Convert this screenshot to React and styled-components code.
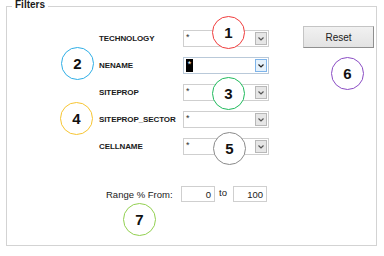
import React from 'react';
import styled, { createGlobalStyle } from 'styled-components';

const GlobalStyle = createGlobalStyle`
  html, body {
    margin: 0;
    padding: 0;
    background: #ffffff;
  }
  body {
    font-family: "Liberation Sans", Arial, sans-serif;
    color: #1a1a1a;
  }
`;

const Page = styled.div`
  width: 384px;
  height: 256px;
  overflow: hidden;
  background: #ffffff;
`;

const Group = styled.div`
  position: relative;
  box-sizing: border-box;
  margin: 6px 0 0 6px;
  width: 371px;
  height: 240px;
  border: 1px solid #d3d3d3;
  box-shadow: inset 1px 1px 0 #ffffff;
`;

const Legend = styled.span`
  position: absolute;
  left: 5px;
  top: -8px;
  padding: 0 3px;
  background: #ffffff;
  font-size: 10px;
  line-height: 12px;
  font-weight: bold;
  color: #1a1a1a;
`;

const Content = styled.div`
  display: flex;
  align-items: flex-start;
`;

const Fields = styled.div`
  display: flex;
  flex-direction: column;
  margin: 23px 0 0 92px;
`;

const Grid = styled.div`
  display: grid;
  grid-template-columns: 84px 86px;
  grid-auto-rows: 17px;
  row-gap: 10px;
  align-items: center;
`;

const Label = styled.span`
  font-size: 8px;
  font-weight: bold;
  color: #1a1a1a;
  letter-spacing: -0.1px;
`;

const Combo = styled.div`
  box-sizing: border-box;
  display: flex;
  align-items: stretch;
  height: 17px;
  border: 1px solid ${p => (p.$focused ? '#b9c9d9' : '#cfcfcf')};
  background: #ffffff;
`;

const ComboText = styled.div`
  flex: 1;
  padding: 1px 0 0 2px;
  font-size: 9px;
  line-height: 10px;
  color: #333;
`;

const Selected = styled.span`
  display: inline-block;
  width: 7px;
  height: 13px;
  background: #000000;
  color: #ffffff;
  font-size: 9px;
  line-height: 10px;
  text-align: center;
`;

const DropButton = styled.div`
  box-sizing: border-box;
  width: 12px;
  margin: 1px;
  display: flex;
  align-items: center;
  justify-content: center;
  border: 1px solid ${p => (p.$focused ? '#7eb4ea' : '#b8b8b8')};
  background: ${p => (p.$focused ? '#e5f1fb' : '#e6e6e6')};
`;

const RangeRow = styled.div`
  display: flex;
  align-items: center;
  margin: 31px 0 0 7px;
  font-size: 9.5px;
  color: #1a1a1a;
`;

const RangeLabel = styled.span`
  width: 75px;
`;

const NumBox = styled.div`
  box-sizing: border-box;
  width: 34px;
  height: 16px;
  border: 1px solid #cfcfcf;
  padding: 2px 3px 0 0;
  text-align: right;
  font-size: 9.5px;
  line-height: 11px;
`;

const To = styled.span`
  width: 18px;
  padding-left: 4px;
  box-sizing: border-box;
  margin-top: -4px;
`;

const ResetButton = styled.button`
  box-sizing: border-box;
  margin: 19px 0 0 34px;
  width: 71px;
  height: 22px;
  border: 1px solid #c4c4c4;
  border-right-color: #8f8f8f;
  border-bottom-color: #8f8f8f;
  background: linear-gradient(#f1f1f1, #e3e3e3);
  font-family: "Liberation Sans", Arial, sans-serif;
  font-size: 10px;
  color: #222;
  padding: 0;
`;

const Marker = styled.div`
  position: absolute;
  left: ${p => p.$x - 7 - 16}px;
  top: ${p => p.$y - 7 - 16}px;
  box-sizing: border-box;
  width: 33px;
  height: 33px;
  border-radius: 50%;
  border: 1px solid ${p => p.$color};
  background: #ffffff;
  display: flex;
  align-items: center;
  justify-content: center;
  font-family: "Liberation Sans", Arial, sans-serif;
  font-weight: bold;
  font-size: 15px;
  color: #111;
`;

const Chevron = ({ dark }) => (
  <svg width="6" height="4" viewBox="0 0 6 4">
    <polyline
      points="0.5,0.5 3,3 5.5,0.5"
      fill="none"
      stroke={dark ? '#222' : '#555'}
      strokeWidth="1.2"
    />
  </svg>
);

const rows = [
  { label: 'TECHNOLOGY' },
  { label: 'NENAME', focused: true },
  { label: 'SITEPROP' },
  { label: 'SITEPROP_SECTOR' },
  { label: 'CELLNAME' },
];

const markers = [
  { n: 1, x: 228, y: 32, color: '#f03c3c' },
  { n: 2, x: 77, y: 63, color: '#2eaee6' },
  { n: 3, x: 228, y: 93, color: '#1fba5c' },
  { n: 4, x: 76, y: 118, color: '#f7c531' },
  { n: 5, x: 229, y: 148, color: '#8a8a8a' },
  { n: 6, x: 347, y: 73, color: '#8a4cc4' },
  { n: 7, x: 139, y: 219, color: '#92d050' },
];

const App = () => (
  <Page>
    <GlobalStyle />
    <Group>
      <Legend>Filters</Legend>
      <Content>
        <Fields>
          <Grid>
            {rows.map(r => (
              <React.Fragment key={r.label}>
                <Label>{r.label}</Label>
                <Combo $focused={r.focused}>
                  <ComboText>{r.focused ? <Selected>*</Selected> : '*'}</ComboText>
                  <DropButton $focused={r.focused}>
                    <Chevron dark={r.focused} />
                  </DropButton>
                </Combo>
              </React.Fragment>
            ))}
          </Grid>
          <RangeRow>
            <RangeLabel>Range % From:</RangeLabel>
            <NumBox>0</NumBox>
            <To>to</To>
            <NumBox>100</NumBox>
          </RangeRow>
        </Fields>
        <ResetButton>Reset</ResetButton>
      </Content>
      {markers.map(m => (
        <Marker key={m.n} $x={m.x} $y={m.y} $color={m.color}>{m.n}</Marker>
      ))}
    </Group>
  </Page>
);

export default App;
